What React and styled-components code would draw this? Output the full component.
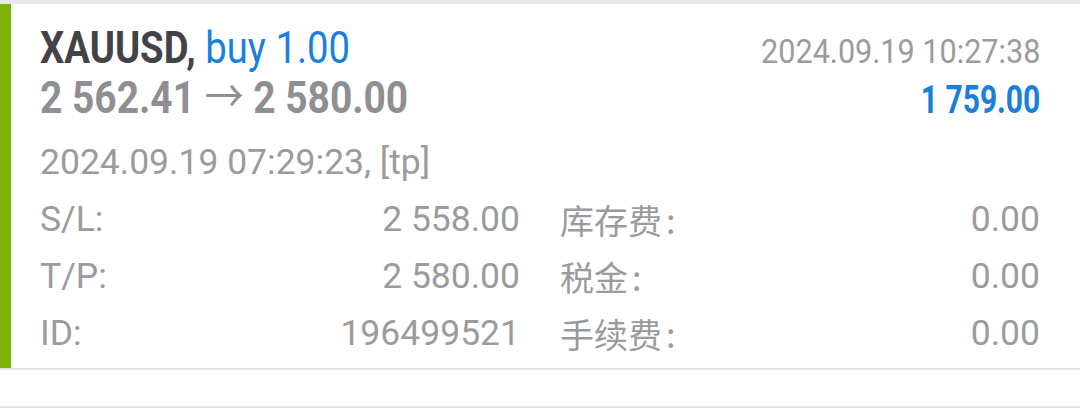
import React from "react"
import styled, { createGlobalStyle } from "styled-components"

const Global = createGlobalStyle`
  html, body {
    margin: 0;
    padding: 0;
    background: #ffffff;
  }
  body {
    font-family: Roboto, "Noto Sans CJK SC", sans-serif;
    width: 1080px;
    height: 408px;
    overflow: hidden;
  }
`

const List = styled("div")`
  display: flex;
  flex-direction: column;
`

const Card = styled("div")`
  display: flex;
  border-top: 4px solid #e9e9e9;
  border-bottom: 2px solid #e3e3e3;
  background: #fff;
`

const Stripe = styled("div")`
  width: 11px;
  flex: none;
  background: #7db306;
`

const Body = styled("div")`
  flex: 1;
  padding: 19px 40px 6px 29px;
`

const Head = styled("div")`
  display: grid;
  grid-template-columns: 1fr auto;
  grid-auto-rows: 50px;
  align-items: baseline;
`

const Cond = styled("div")`
  line-height: 50px;
  white-space: nowrap;
  font-size: ${props => props.size || 45}px;
  font-weight: ${props => props.bold ? 700 : 400};
  color: ${props => props.color || "#434347"};
  justify-self: ${props => props.right ? "end" : "start"};
  transform: scaleX(${props => props.squeeze || 0.85});
  transform-origin: ${props => props.right ? "right" : "left"} center;
`

const Blue = styled("span")`
  color: #1a7fdc;
  font-weight: 400;
`

const Arrow = styled("span")`
  font-weight: 400;
`

const Grid = styled("div")`
  margin-top: 11px;
  display: grid;
  grid-template-columns: 1fr 1fr;
  column-gap: 40px;
  font-size: 35.5px;
  line-height: 57px;
  color: #9b9b9e;
`

const Full = styled("div")`
  grid-column: 1 / 3;
  white-space: nowrap;
`

const Cell = styled("div")`
  display: flex;
  justify-content: space-between;
  white-space: nowrap;
`

const Label = styled("span")`
  font-family: ${props => props.cjk ? `"Noto Sans CJK SC", Roboto, sans-serif` : "Roboto, sans-serif"};
  font-size: ${props => props.cjk ? 34 : 35.5}px;
`

const Colon = styled("span")`
  margin-left: 4px;
`

const Gap = styled("div")`
  height: 36px;
  border-bottom: 2px solid #e3e3e3;
`

const rows = [
  ["S/L:", "2 558.00", "库存费", "0.00"],
  ["T/P:", "2 580.00", "税金", "0.00"],
  ["ID:", "196499521", "手续费", "0.00"],
]

export default function App() {
  return (
    <>
      <Global />
      <List>
        <Card>
          <Stripe />
          <Body>
            <Head>
              <Cond bold>XAUUSD, <Blue>buy 1.00</Blue></Cond>
              <Cond right size={34} squeeze={0.9} color="#9b9b9e">2024.09.19 10:27:38</Cond>
              <Cond bold squeeze={0.865} color="#8f8f93">2 562.41 <Arrow>→</Arrow> 2 580.00</Cond>
              <Cond right bold size={38} squeeze={0.79} color="#1a7fdc">1 759.00</Cond>
            </Head>
            <Grid>
              <Full>2024.09.19 07:29:23, [tp]</Full>
              {rows.map(([a, b, c, d]) => (
                <React.Fragment key={a}>
                  <Cell><Label>{a}</Label><span>{b}</span></Cell>
                  <Cell><Label cjk>{c}<Colon>:</Colon></Label><span>{d}</span></Cell>
                </React.Fragment>
              ))}
            </Grid>
          </Body>
        </Card>
        <Gap />
      </List>
    </>
  )
}
